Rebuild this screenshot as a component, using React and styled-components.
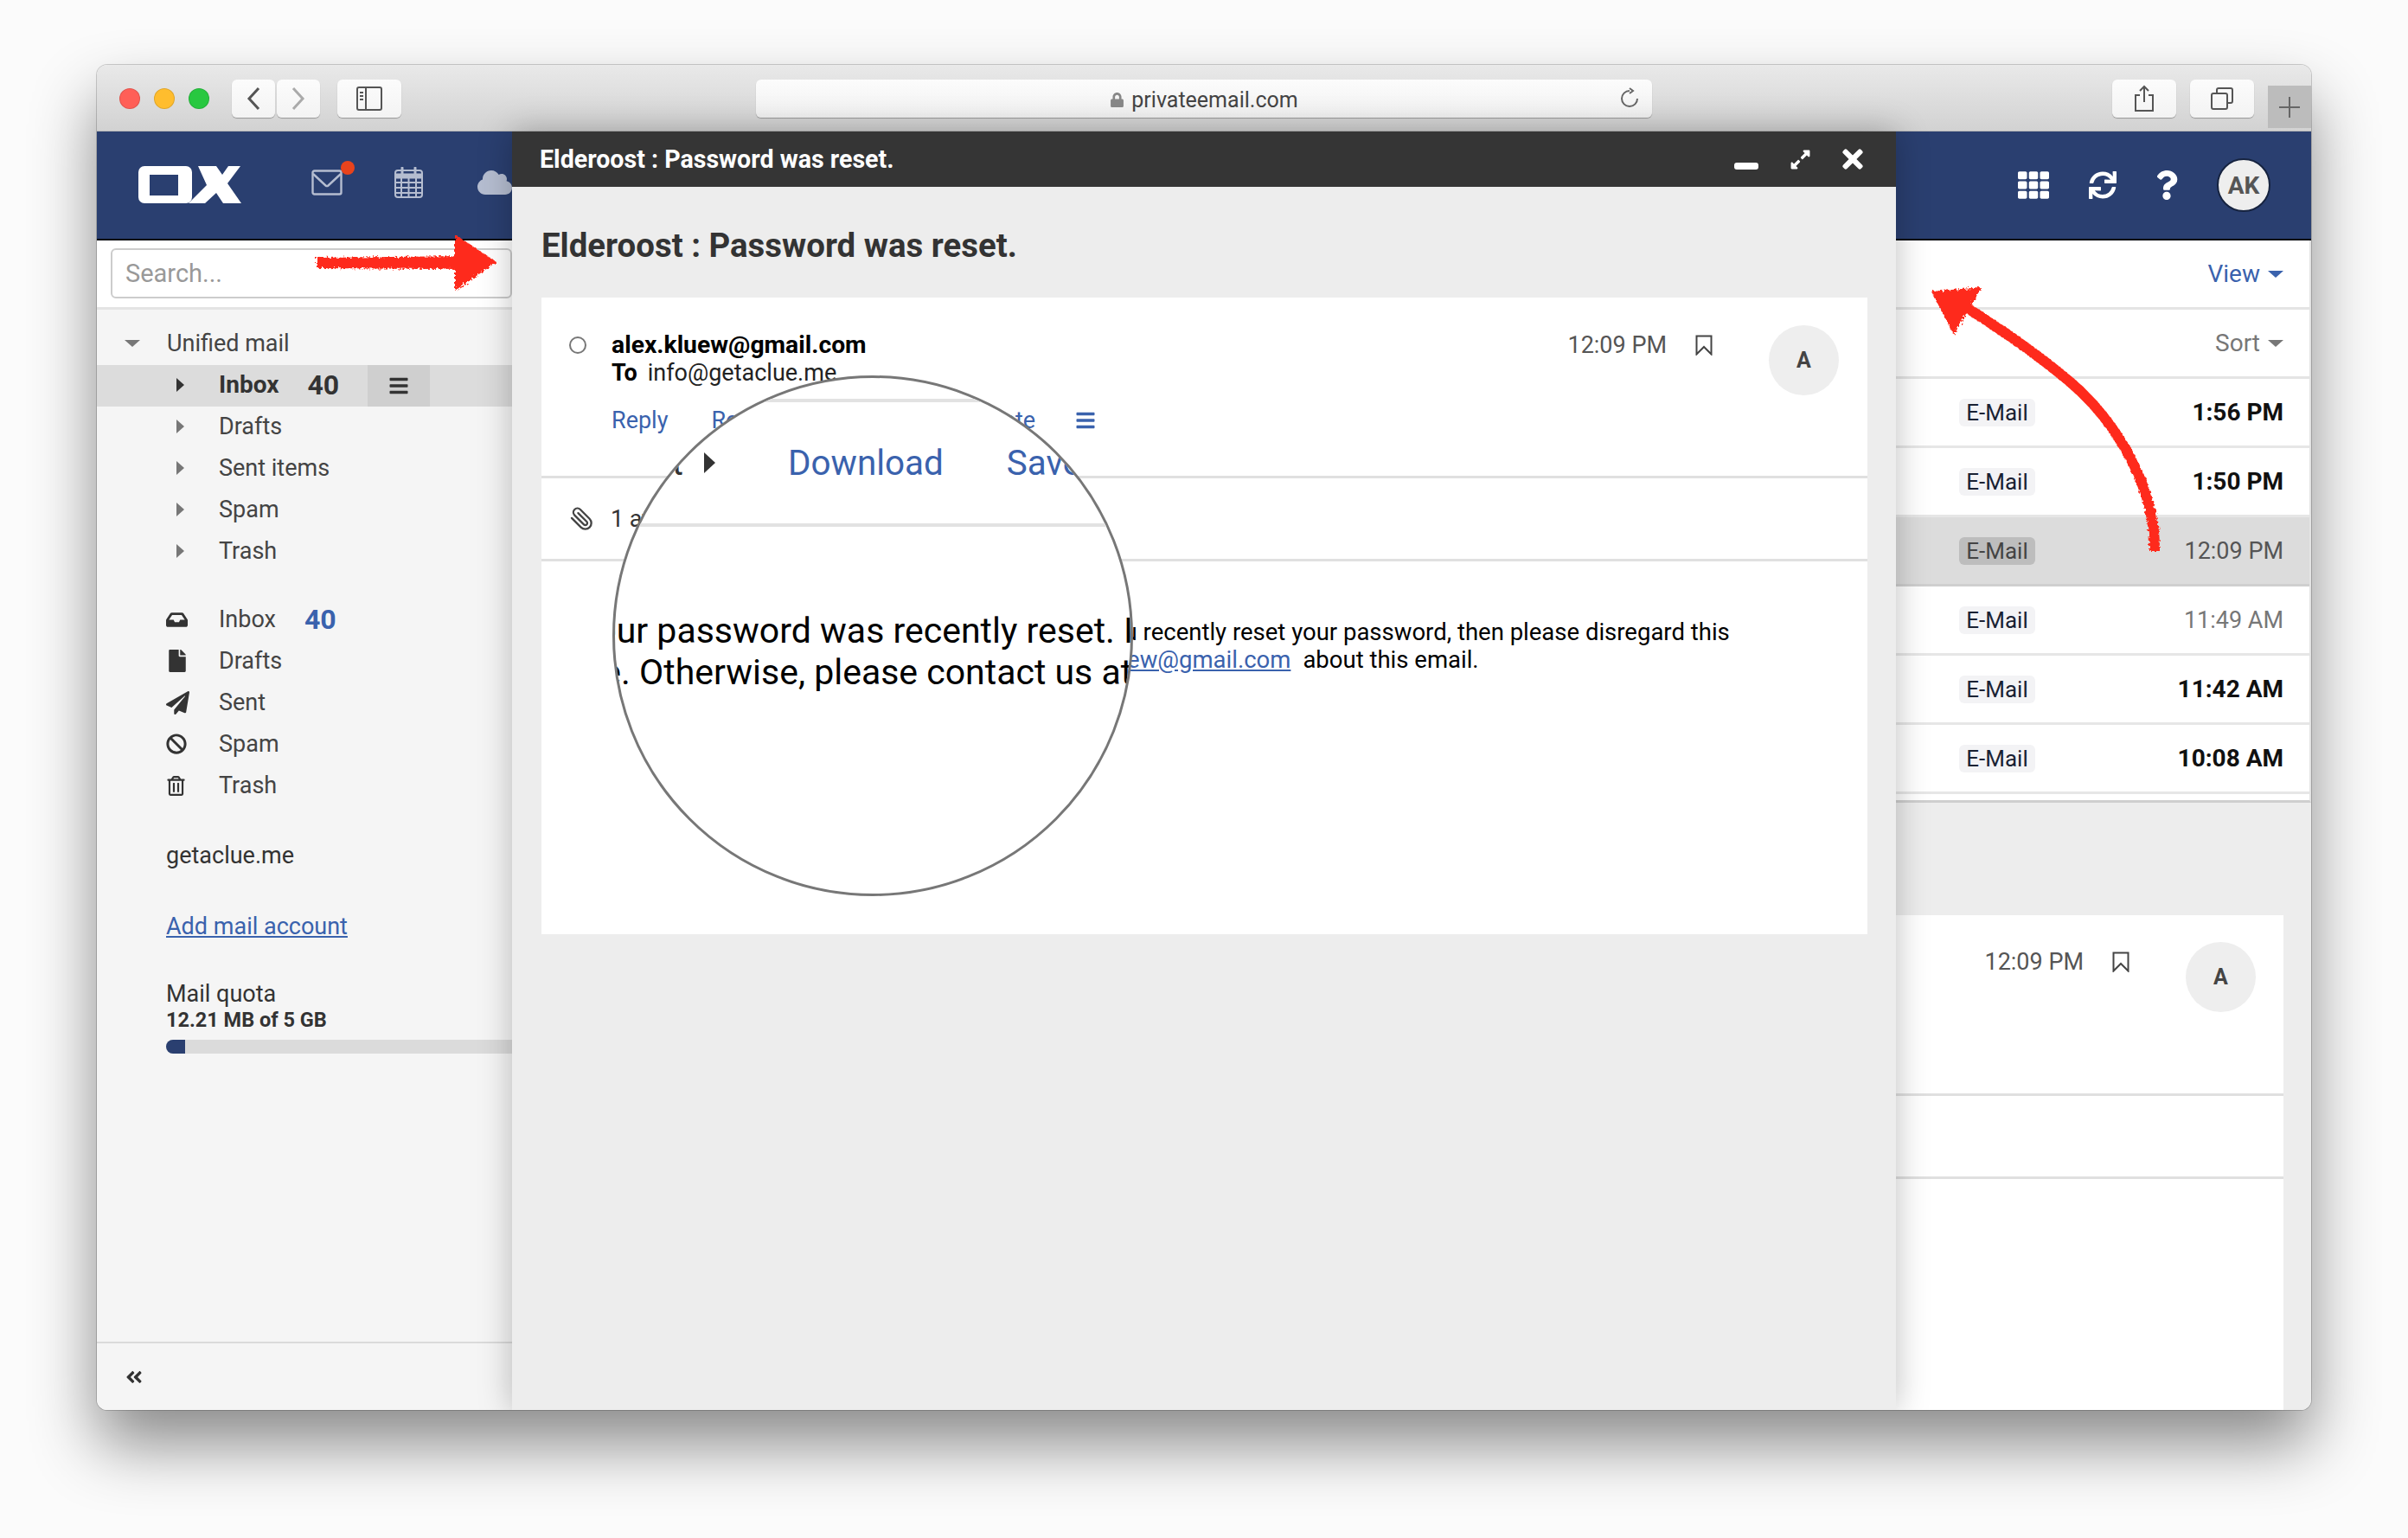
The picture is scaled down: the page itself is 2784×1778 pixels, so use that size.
import React from "react";
import styled, { createGlobalStyle } from "styled-components";
import {
  FaAngleDoubleLeft,
  FaBan,
  FaBars,
  FaCloud,
  FaExpandAlt,
  FaFile,
  FaInbox,
  FaLock,
  FaPaperPlane,
  FaQuestion,
  FaRegTrashAlt,
  FaSync,
  FaTh,
  FaTimes,
} from "react-icons/fa";
import { FiPaperclip } from "react-icons/fi";

const GlobalStyle = createGlobalStyle`
  html, body {
    margin: 0;
    background: #fbfbfb;
  }
  * {
    box-sizing: border-box;
  }
`;

const BLUE = "#3a62ad";
const FONT = `Roboto, "Liberation Sans", sans-serif`;

const Page = styled.div`
  position: relative;
  width: 2784px;
  height: 1778px;
  padding: 75px 112px 148px;
  overflow: hidden;
  font-family: ${FONT};
  font-size: 27px;
  color: #333;
`;

const BrowserWindow = styled.div`
  display: flex;
  flex-direction: column;
  width: 2560px;
  height: 1555px;
  border-radius: 12px;
  overflow: hidden;
`;

const WindowShadow = styled.div`
  border-radius: 12px;
  box-shadow: 0 0 0 1px rgba(0, 0, 0, 0.18), 0 40px 75px rgba(0, 0, 0, 0.45);
`;

const TitleBar = styled.div`
  display: flex;
  flex: none;
  height: 77px;
  padding: 17px 0 0 26px;
  background: linear-gradient(#e9e9e9, #d2d2d2);
  border-bottom: 1px solid #b9b9b9;
`;

const Lights = styled.div`
  display: flex;
  gap: 16px;
  margin: 10px 26px 0 0;
`;

const Light = styled.span`
  width: 24px;
  height: 24px;
  border-radius: 50%;
  background: ${(props) => props.$color};
  border: 1px solid rgba(0, 0, 0, 0.12);
`;

const ChromeButton = styled.div`
  display: flex;
  align-items: center;
  justify-content: center;
  width: ${(props) => props.$width || `74px`};
  height: 44px;
  margin-left: ${(props) => props.$gap || `0px`};
  background: linear-gradient(#fcfcfc, #f3f3f3);
  border-radius: 6px;
  box-shadow: 0 1px 1px rgba(0, 0, 0, 0.3);
  color: #555;
`;

const UrlBar = styled.div`
  position: relative;
  display: flex;
  align-items: center;
  justify-content: center;
  gap: 8px;
  width: 1036px;
  height: 44px;
  margin-left: 410px;
  padding-top: 2px;
  background: linear-gradient(#fcfcfc, #f1f1f1);
  border-radius: 6px;
  box-shadow: 0 1px 1px rgba(0, 0, 0, 0.3);
  font-size: 25px;
  color: #444;
`;

const Reload = styled.svg`
  position: absolute;
  right: 14px;
  top: 9px;
`;

const RightChrome = styled.div`
  display: flex;
  margin-left: auto;
`;

const NewTab = styled.div`
  display: flex;
  align-items: center;
  justify-content: center;
  width: 50px;
  height: 49px;
  margin: 7px 0 0 16px;
  background: #bcbcbc;
`;

const AppArea = styled.div`
  position: relative;
  display: flex;
  flex-direction: column;
  flex: 1;
  min-height: 0;
`;

const AppHeader = styled.header`
  display: flex;
  flex: none;
  align-items: center;
  height: 126px;
  padding: 0 47px 0 48px;
  background: #2a3f70;
  border-bottom: 2px solid #05070d;
`;

const HeaderApp = styled.div`
  position: relative;
  display: flex;
  margin: 0 0 6px ${(props) => props.$gap};
  color: #b5bdd0;
`;

const Badge = styled.span`
  position: absolute;
  top: -10px;
  right: -14px;
  width: 16px;
  height: 16px;
  border-radius: 50%;
  background: #e8431c;
`;

const HeaderTools = styled.div`
  display: flex;
  align-items: center;
  gap: 41px;
  margin-left: auto;
  color: #fff;
`;

const GridIcon = styled(FaTh)`
  margin-right: 5px;
`;

const UserAvatar = styled.div`
  display: flex;
  align-items: center;
  justify-content: center;
  width: 62px;
  height: 62px;
  border-radius: 50%;
  background: #eee;
  border: 2px solid #16233f;
  font-size: 28px;
  font-weight: 700;
  color: #555;
`;

const AppBody = styled.div`
  display: flex;
  flex: 1;
  min-height: 0;
`;

const Sidebar = styled.aside`
  display: flex;
  flex-direction: column;
  flex: none;
  width: 480px;
  background: #f5f5f5;
`;

const SearchRow = styled.div`
  flex: none;
  height: 80px;
  padding: 9px 0 0 16px;
  background: #fff;
  border-bottom: 3px solid #e4e4e4;
`;

const SearchField = styled.div`
  display: flex;
  align-items: center;
  height: 58px;
  padding-left: 15px;
  border: 2px solid #ccc;
  border-radius: 6px;
  background: #fff;
  font-size: 29px;
  color: #999;
`;

const Tree = styled.nav`
  flex: 1;
  padding-top: 16px;
`;

const FolderRow = styled.div`
  display: flex;
  align-items: center;
  height: 48px;
  padding-left: ${(props) => props.$indent || `80px`};
  background: ${(props) => (props.$active ? `#dcdcdc` : `transparent`)};
  font-size: ${(props) => (props.$active ? `28px` : `27px`)};
  font-weight: ${(props) => (props.$active ? 700 : 400)};
  color: ${(props) => (props.$active ? `#333` : `#444`)};
`;

const FolderGroup = styled.div`
  margin-top: ${(props) => props.$gap || `0px`};
  & > ${FolderRow} {
    padding-bottom: ${(props) => props.$lift || `0px`};
  }
`;

const IconCell = styled.span`
  display: flex;
  align-items: center;
  flex: none;
  width: ${(props) => props.$width || `61px`};
  color: #333;
`;

const Triangle = styled.span`
  width: 0;
  height: 0;
  margin-left: 12px;
  border-top: 8px solid transparent;
  border-bottom: 8px solid transparent;
  border-left: 9px solid ${(props) => (props.$dark ? `#333` : `#777`)};
`;

const DownCaret = styled.span`
  width: 0;
  height: 0;
  border-left: 9px solid transparent;
  border-right: 9px solid transparent;
  border-top: 8px solid ${(props) => props.$color || `#777`};
`;

const Count = styled.span`
  margin-left: 33px;
  font-size: 32px;
  font-weight: 700;
  color: ${(props) => props.$color || `#333`};
`;

const RowMenu = styled.span`
  display: flex;
  align-items: center;
  justify-content: center;
  width: 72px;
  height: 48px;
  margin: 0 0 -3px 33px;
  background: #cfcfcf;
`;

const AccountLine = styled.div`
  height: 48px;
  margin: 33px 0 0 80px;
  line-height: 48px;
`;

const AddAccount = styled.a`
  display: block;
  height: 48px;
  margin: 34px 0 0 80px;
  line-height: 48px;
  color: ${BLUE};
  text-decoration: underline;
`;

const Quota = styled.div`
  margin: 38px 0 0 80px;
`;

const QuotaLabel = styled.div`
  line-height: 32px;
`;

const QuotaValue = styled.div`
  line-height: 28px;
  font-size: 23.500px;
  font-weight: 700;
`;

const QuotaBar = styled.div`
  height: 16px;
  margin-top: 9px;
  border-radius: 8px 0 0 8px;
  background: #dbdbdb;
  overflow: hidden;
`;

const QuotaFill = styled.div`
  height: 100%;
  background: #2a3f70;
`;

const SidebarFooter = styled.div`
  display: flex;
  align-items: center;
  flex: none;
  height: 79px;
  padding-left: 32px;
  border-top: 2px solid #dadada;
  color: #333;
`;

const MainPane = styled.main`
  display: flex;
  flex-direction: column;
  flex: 1;
  min-width: 0;
  background: #ededed;
`;

const ListPane = styled.section`
  flex: none;
  height: 650px;
  background: #fff;
  border-right: 2px solid #e4e4e4;
  border-bottom: 3px solid #cfcfcf;
`;

const ListToolbar = styled.div`
  display: flex;
  align-items: center;
  justify-content: flex-end;
  gap: 9px;
  height: ${(props) => props.$height};
  padding-right: 30px;
  border-bottom: 3px solid #e4e4e4;
  font-size: 28px;
  color: ${(props) => props.$color};
`;

const MailRow = styled.div`
  display: flex;
  align-items: center;
  justify-content: flex-end;
  height: 80px;
  padding-right: 30px;
  background: ${(props) => (props.$selected ? `#dcdcdc` : `#fff`)};
  border-bottom: 3px solid ${(props) => (props.$selected ? `#cfcfcf` : `#e6e6e6`)};
`;

const TypeTag = styled.span`
  display: flex;
  align-items: center;
  justify-content: center;
  width: 88px;
  height: 32px;
  border-radius: 6px;
  background: ${(props) => (props.$selected ? `#bdbdbd` : `#f3f3f5`)};
  font-size: 26px;
  color: ${(props) => (props.$selected ? `#444` : `#1a2233`)};
`;

const RowTime = styled.span`
  width: 287px;
  text-align: right;
  font-size: ${(props) => (props.$unread ? `28px` : `27px`)};
  font-weight: ${(props) => (props.$unread ? 700 : 400)};
  color: ${(props) => (props.$unread ? `#111` : props.$selected ? `#555` : `#777`)};
`;

const DetailCard = styled.section`
  flex: 1;
  min-height: 0;
  margin: 130px 32px 0 0;
  background: #fff;
`;

const MetaRow = styled.div`
  display: flex;
  height: ${(props) => props.$height};
  padding: 31px 32px 0;
  border-bottom: 3px solid #e0e0e0;
`;

const Meta = styled.div`
  display: flex;
  align-items: flex-start;
  margin-left: auto;
`;

const MetaTime = styled.span`
  margin-top: 7px;
  line-height: 32px;
  font-size: 27px;
  color: #555;
`;

const Bookmark = styled.svg`
  margin: 11px 65px 0 33px;
`;

const SenderAvatar = styled.div`
  display: flex;
  align-items: center;
  justify-content: center;
  width: 81px;
  height: 81px;
  border-radius: 50%;
  background: #eee;
  font-size: 25px;
  font-weight: 700;
  color: #444;
`;

const BlankRow = styled.div`
  height: 96px;
  border-bottom: 3px solid #e0e0e0;
`;

const Modal = styled.div`
  position: absolute;
  top: 0;
  bottom: 0;
  left: 480px;
  z-index: 2;
  display: flex;
  flex-direction: column;
  width: 1600px;
  background: #ededed;
  box-shadow: 0 0 36px rgba(0, 0, 0, 0.26);
`;

const ModalBar = styled.div`
  display: flex;
  flex: none;
  align-items: center;
  height: 64px;
  padding: 0 33px 0 32px;
  background: #353535;
  font-size: 28.600px;
  font-weight: 700;
  color: #fff;
`;

const ModalControls = styled.div`
  display: flex;
  align-items: center;
  gap: 36px;
  margin-left: auto;
`;

const Minimize = styled.span`
  width: 28px;
  height: 8px;
  margin-top: 16px;
  border-radius: 3px;
  background: #fff;
`;

const CloseIcon = styled(FaTimes)`
  margin-left: -5px;
`;

const ModalTitle = styled.h1`
  display: flex;
  flex: none;
  align-items: center;
  height: 128px;
  margin: 0;
  padding: 6px 0 0 34px;
  font-size: 38.400px;
  font-weight: 700;
  color: #333;
`;

const MailCard = styled.article`
  width: 1533px;
  height: 736px;
  margin-left: 34px;
  background: #fff;
`;

const MailHeader = styled.div`
  display: flex;
  height: 209px;
  padding: 32px 33px 0 32px;
  border-bottom: 3px solid #e0e0e0;
`;

const ReadDot = styled.span`
  flex: none;
  width: 20px;
  height: 20px;
  margin: 13px 29px 0 0;
  border: 2px solid #777;
  border-radius: 50%;
`;

const Sender = styled.div`
  margin-top: 7px;
  line-height: 32px;
  font-size: 28.300px;
  font-weight: 700;
  color: #000;
`;

const Recipient = styled.div`
  line-height: 32px;
  color: #222;
`;

const ToLabel = styled.b`
  margin-right: 12px;
  color: #000;
`;

const Actions = styled.div`
  display: flex;
  align-items: center;
  gap: 50px;
  height: 32px;
  margin-top: 23px;
  color: ${BLUE};
`;

const ActionMenu = styled(FaBars)`
  margin-left: -4px;
`;

const AttachmentRow = styled.div`
  display: flex;
  align-items: center;
  height: 96px;
  padding-left: 32px;
  border-bottom: 3px solid #e0e0e0;
`;

const ClipIcon = styled(FiPaperclip)`
  flex: none;
  margin-right: 20px;
  color: #444;
  transform: scaleX(-1);
`;

const MailBody = styled.div`
  padding-top: 66px;
  line-height: 32px;
  font-size: 27.500px;
  color: #000;
  white-space: nowrap;
`;

const MailLine = styled.div`
  padding-left: ${(props) => props.$indent};
`;

const MailLink = styled.a`
  margin-right: 14px;
  color: ${BLUE};
  text-decoration: underline;
`;

const Magnifier = styled.div`
  position: absolute;
  top: 282px;
  left: 116px;
  z-index: 3;
  width: 602px;
  height: 602px;
  border: 3px solid #777;
  border-radius: 50%;
  background: #fff;
  overflow: hidden;
  white-space: nowrap;
`;

const LensRule = styled.div`
  height: 4px;
  margin-top: ${(props) => props.$top || `0px`};
  background: #e2e2e2;
`;

const LensActions = styled.div`
  display: flex;
  align-items: center;
  height: 140px;
  font-size: 40.400px;
  color: ${BLUE};
`;

const LensCount = styled.span`
  display: flex;
  flex: none;
  justify-content: flex-end;
  width: 79px;
  color: #333;
`;

const LensArrow = styled.span`
  flex: none;
  width: 0;
  height: 0;
  margin-left: 24px;
  border-top: 12px solid transparent;
  border-bottom: 12px solid transparent;
  border-left: 13px solid #333;
`;

const LensAction = styled.span`
  flex: none;
  margin-left: ${(props) => props.$gap};
`;

const LensText = styled.div`
  margin: 96px 0 0 ${(props) => props.$shift};
  line-height: 48px;
  font-size: 41px;
  color: #000;
`;

const LensTextNext = styled(LensText)`
  margin-top: 0;
`;

const Annotations = styled.svg`
  position: absolute;
  top: 0;
  left: 0;
  z-index: 5;
  pointer-events: none;
`;

const inboxFolders = ["Drafts", "Sent items", "Spam", "Trash"];

const shortcuts = [
  { label: "Drafts", icon: <FaFile size={26} /> },
  { label: "Sent", icon: <FaPaperPlane size={27} /> },
  { label: "Spam", icon: <FaBan size={24} /> },
  { label: "Trash", icon: <FaRegTrashAlt size={23} /> },
];

const mails = [
  { time: "1:56 PM", unread: true },
  { time: "1:50 PM", unread: true },
  { time: "12:09 PM", selected: true },
  { time: "11:49 AM" },
  { time: "11:42 AM", unread: true },
  { time: "10:08 AM", unread: true },
];

const Logo = () => (
  <svg width="120" height="44" viewBox="0 0 120 44">
    <path
      fill="#fff"
      fillRule="evenodd"
      d="M7 0h48a7 7 0 0 1 7 7v29a7 7 0 0 1-7 7H7a7 7 0 0 1-7-7V7a7 7 0 0 1 7-7zM13 10v24h33V10z"
    />
    <path fill="#fff" d="M69 0h21l7 10 7-10h14l-15 20 16 23H98l-8-12-13 12H58l21-21z" />
  </svg>
);

const MailIcon = () => (
  <svg width="36" height="30" viewBox="0 0 36 30" fill="none" stroke="#b5bdd0" strokeWidth="2.4">
    <rect x="1.500" y="1.500" width="33" height="27" rx="2" />
    <path d="M2 5l14.500 13.500q1.500 1.200 3 0L34 5" />
  </svg>
);

const CalendarIcon = () => (
  <svg width="33" height="36" viewBox="0 0 33 36" fill="none" stroke="#b5bdd0" strokeWidth="2">
    <rect x="1" y="4" width="31" height="31" rx="3" />
    <path d="M1 10.500h31" strokeWidth="6" />
    <path d="M1 18h31M1 24h31M1 30h31M8 13v22M16.500 13v22M25 13v22" />
    <path d="M9 1v7M24 1v7" strokeWidth="3" strokeLinecap="round" />
  </svg>
);

const SidebarToggleIcon = () => (
  <svg width="30" height="28" viewBox="0 0 30 28" fill="none" stroke="#555" strokeWidth="2">
    <rect x="1" y="1" width="28" height="26" rx="2" />
    <path d="M11 1v26" />
    <path d="M4 7h4M4 11h4M4 15h4" />
  </svg>
);

const Chevron = ({ left, color }) => (
  <svg width="16" height="28" viewBox="0 0 16 28" fill="none" stroke={color} strokeWidth="3">
    <path d={left ? "M14 2L3 14l11 12" : "M2 2l11 12L2 26"} />
  </svg>
);

const ShareIcon = () => (
  <svg width="24" height="32" viewBox="0 0 24 32" fill="none" stroke="#555" strokeWidth="2">
    <path d="M7 12H2v18h20V12h-5M12 20V2M7 7l5-5 5 5" />
  </svg>
);

const TabsIcon = () => (
  <svg width="26" height="26" viewBox="0 0 26 26" fill="none" stroke="#555" strokeWidth="2">
    <rect x="1" y="7" width="18" height="18" rx="2" />
    <path d="M7 7V3a2 2 0 0 1 2-2h14a2 2 0 0 1 2 2v13a2 2 0 0 1-2 2h-4" />
  </svg>
);

const PlusIcon = () => (
  <svg width="24" height="24" viewBox="0 0 24 24" stroke="#666" strokeWidth="2">
    <path d="M12 0v24M0 12h24" />
  </svg>
);

const BookmarkIcon = () => (
  <Bookmark width="20" height="24" viewBox="0 0 20 24" fill="none" stroke="#444" strokeWidth="2">
    <path d="M1.500 1.500h17v21L10 14l-8.500 8.500z" />
  </Bookmark>
);

const MailMeta = () => (
  <Meta>
    <MetaTime>12:09 PM</MetaTime>
    <BookmarkIcon />
    <SenderAvatar>A</SenderAvatar>
  </Meta>
);

const App = () => {
  return (
    <Page>
      <GlobalStyle />
      <WindowShadow>
        <BrowserWindow>
          <TitleBar>
            <Lights>
              <Light $color="#ff5f57" />
              <Light $color="#ffbd2e" />
              <Light $color="#28c840" />
            </Lights>
            <ChromeButton $width="50px">
              <Chevron left color="#555" />
            </ChromeButton>
            <ChromeButton $width="50px" $gap="2px">
              <Chevron color="#aaa" />
            </ChromeButton>
            <ChromeButton $gap="20px">
              <SidebarToggleIcon />
            </ChromeButton>
            <UrlBar>
              <FaLock size={17} color="#888" />
              privateemail.com
              <Reload width="24" height="24" viewBox="0 0 24 24" fill="none" stroke="#666" strokeWidth="2">
                <path d="M12 4a9 9 0 1 0 9 9M12 1l4 3-4 3" />
              </Reload>
            </UrlBar>
            <RightChrome>
              <ChromeButton>
                <ShareIcon />
              </ChromeButton>
              <ChromeButton $gap="16px">
                <TabsIcon />
              </ChromeButton>
              <NewTab>
                <PlusIcon />
              </NewTab>
            </RightChrome>
          </TitleBar>

          <AppArea>
            <AppHeader>
              <Logo />
              <HeaderApp $gap="80px">
                <MailIcon />
                <Badge />
              </HeaderApp>
              <HeaderApp $gap="60px">
                <CalendarIcon />
              </HeaderApp>
              <HeaderApp $gap="63px">
                <FaCloud size={40} />
              </HeaderApp>
              <HeaderTools>
                <GridIcon size={36} />
                <FaSync size={32} />
                <FaQuestion size={34} />
                <UserAvatar>AK</UserAvatar>
              </HeaderTools>
            </AppHeader>

            <AppBody>
              <Sidebar>
                <SearchRow>
                  <SearchField>Search...</SearchField>
                </SearchRow>
                <Tree>
                  <FolderGroup $lift="3px">
                    <FolderRow $indent="32px">
                      <IconCell $width="49px">
                        <DownCaret />
                      </IconCell>
                      Unified mail
                    </FolderRow>
                    <FolderRow $active>
                      <IconCell>
                        <Triangle $dark />
                      </IconCell>
                      Inbox
                      <Count>40</Count>
                      <RowMenu>
                        <FaBars size={24} />
                      </RowMenu>
                    </FolderRow>
                    {inboxFolders.map((label) => (
                      <FolderRow key={label}>
                        <IconCell>
                          <Triangle />
                        </IconCell>
                        {label}
                      </FolderRow>
                    ))}
                  </FolderGroup>
                  <FolderGroup $gap="30px">
                    <FolderRow>
                      <IconCell>
                        <FaInbox size={25} />
                      </IconCell>
                      Inbox
                      <Count $color={BLUE}>40</Count>
                    </FolderRow>
                    {shortcuts.map((item) => (
                      <FolderRow key={item.label}>
                        <IconCell>{item.icon}</IconCell>
                        {item.label}
                      </FolderRow>
                    ))}
                  </FolderGroup>
                  <AccountLine>getaclue.me</AccountLine>
                  <AddAccount>Add mail account</AddAccount>
                  <Quota>
                    <QuotaLabel>Mail quota</QuotaLabel>
                    <QuotaValue>12.21 MB of 5 GB</QuotaValue>
                    <QuotaBar>
                      <QuotaFill style={{ width: `${(22 / 400) * 100}%` }} />
                    </QuotaBar>
                  </Quota>
                </Tree>
                <SidebarFooter>
                  <FaAngleDoubleLeft size={22} />
                </SidebarFooter>
              </Sidebar>

              <MainPane>
                <ListPane>
                  <ListToolbar $height="80px" $color={BLUE}>
                    View
                    <DownCaret $color={BLUE} />
                  </ListToolbar>
                  <ListToolbar $height="80px" $color="#777">
                    Sort
                    <DownCaret />
                  </ListToolbar>
                  {mails.map((mail) => (
                    <MailRow key={mail.time} $selected={mail.selected}>
                      <TypeTag $selected={mail.selected}>E-Mail</TypeTag>
                      <RowTime $unread={mail.unread} $selected={mail.selected}>
                        {mail.time}
                      </RowTime>
                    </MailRow>
                  ))}
                </ListPane>
                <DetailCard>
                  <MetaRow $height="209px">
                    <MailMeta />
                  </MetaRow>
                  <BlankRow />
                </DetailCard>
              </MainPane>
            </AppBody>

            <Modal>
              <ModalBar>
                Elderoost : Password was reset.
                <ModalControls>
                  <Minimize />
                  <FaExpandAlt size={25} />
                  <CloseIcon size={34} />
                </ModalControls>
              </ModalBar>
              <ModalTitle>Elderoost : Password was reset.</ModalTitle>
              <MailCard>
                <MailHeader>
                  <ReadDot />
                  <div>
                    <Sender>alex.kluew@gmail.com</Sender>
                    <Recipient>
                      <ToLabel>To</ToLabel>
                      info@getaclue.me
                    </Recipient>
                    <Actions>
                      <span>Reply</span>
                      <span>Reply all</span>
                      <span>Forward</span>
                      <span>Delete</span>
                      <ActionMenu size={24} />
                    </Actions>
                  </div>
                  <MailMeta />
                </MailHeader>
                <AttachmentRow>
                  <ClipIcon size={28} />
                  1 attachment
                </AttachmentRow>
                <MailBody>
                  <MailLine $indent="124px">Hello, your password was recently reset. If you recently reset your password, then please disregard this</MailLine>
                  <MailLine $indent="195px">
                    Otherwise, please contact us at <MailLink>alex.kluew@gmail.com</MailLink>about this email.
                  </MailLine>
                </MailBody>
              </MailCard>
              <Magnifier>
                <LensRule $top="24px" />
                <LensActions>
                  <LensCount>1 attachment</LensCount>
                  <LensArrow />
                  <LensAction $gap="84px">Download</LensAction>
                  <LensAction $gap="73px">Save</LensAction>
                </LensActions>
                <LensRule />
                <LensText $shift="-45px">Your password was recently reset. If you</LensText>
                <LensTextNext $shift="-160px">message. Otherwise, please contact us at</LensTextNext>
              </Magnifier>
            </Modal>
          </AppArea>
        </BrowserWindow>
      </WindowShadow>

      <Annotations width="2784" height="1778" viewBox="0 0 2784 1778">
        <defs>
          <filter id="crayon" x="-10%" y="-10%" width="120%" height="120%">
            <feTurbulence type="fractalNoise" baseFrequency="0.35" numOctaves="2" seed="4" />
            <feDisplacementMap in="SourceGraphic" scale="7" />
          </filter>
        </defs>
        <g filter="url(#crayon)" fill="#fe2b1c">
          <path d="M366 298L530 296L530 311L366 310z" />
          <path d="M526 271L574 303L526 336z" />
          <path
            d="M2491 637C2492 570 2455 500 2405 452C2370 420 2320 385 2268 352"
            fill="none"
            stroke="#fe2b1c"
            strokeWidth="12"
          />
          <path d="M2233 337L2291 332L2259 387z" />
        </g>
      </Annotations>
    </Page>
  );
};

export default App;
